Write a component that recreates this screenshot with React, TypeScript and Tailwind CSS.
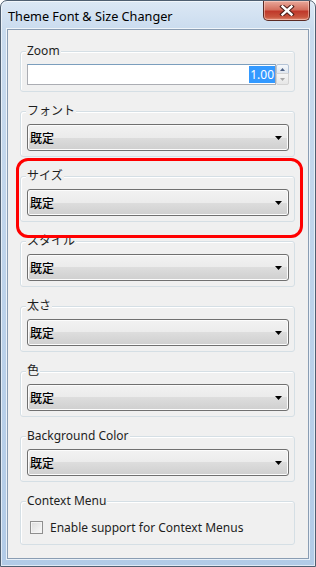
import React from "react";

const ui = { fontFamily: '"Noto Sans", "Noto Sans CJK JP", sans-serif' };
const jp = { fontFamily: '"Noto Sans CJK JP", sans-serif' };

const Arrow = () => (
  <svg width="7" height="4" viewBox="0 0 7 4" className="block">
    <path d="M0 0h7L3.5 4z" fill="#000" />
  </svg>
);

const Select: React.FC<{ value?: string }> = ({ value = "既定" }) => (
  <div className="flex h-[27px] items-center justify-between rounded-[3px] border border-[#707070] bg-[linear-gradient(#f2f2f2_0%,#ebebeb_50%,#dddddd_50%,#cfcfcf_100%)] pl-[2px] pr-[6px] shadow-[inset_0_0_0_1px_#fcfcfc]">
    <span className="text-[12px] font-medium leading-none text-black" style={jp}>
      {value}
    </span>
    <Arrow />
  </div>
);

const Group: React.FC<{ label: string; pb?: string; children: React.ReactNode }> = ({ label, pb = "pb-[5px]", children }) => (
  <div className={`rounded-[3px] border border-[#d5dfe5] pl-[6px] pr-[5px] shadow-[inset_1px_1px_0_#fff] ${pb}`}>
    <div className="-ml-[1px] -mt-[11px] h-[16px] leading-[16px]">
      <span className="inline-block bg-[#f0f0f0] px-[1px] text-[12px] leading-[16px] text-[#1e1e1e]">{label}</span>
    </div>
    <div className="mt-[7px]">{children}</div>
  </div>
);

const Spin = () => (
  <div className="flex w-[13px] flex-col">
    <div className="flex h-[10px] items-center justify-center rounded-t-[2px] border border-[#b4c3d6] bg-[linear-gradient(#f4f7fb,#dfe6ef)]">
      <svg width="5" height="3" viewBox="0 0 5 3"><path d="M2.5 0L5 3H0z" fill="#4d6185" /></svg>
    </div>
    <div className="-mt-px flex h-[12px] items-center justify-center rounded-b-[2px] border border-[#d3d3d3] bg-[linear-gradient(#f5f5f5,#e6e6e6)]">
      <svg width="5" height="3" viewBox="0 0 5 3"><path d="M0 0h5L2.5 3z" fill="#a8a8a8" /></svg>
    </div>
  </div>
);

const CloseButton = () => (
  <div className="flex h-[20px] w-[47px] items-center justify-center rounded-b-[5px] border border-t-0 border-[#5c2b25] bg-[linear-gradient(#e9a99b_0%,#d4705f_45%,#c0392b_55%,#c9563f_85%,#e0907a_100%)] shadow-[inset_0_0_0_1px_rgba(255,220,210,0.5)]">
    <svg width="16" height="11" viewBox="0 0 16 11">
      <path d="M3.5 1.5l9 8M12.5 1.5l-9 8" stroke="#4a1d18" strokeWidth="4.4" strokeLinecap="square" />
      <path d="M3.5 1.5l9 8M12.5 1.5l-9 8" stroke="#fff" strokeWidth="2.4" strokeLinecap="square" />
    </svg>
  </div>
);

export default function App() {
  return (
    <div className="h-[567px] w-[316px] overflow-hidden bg-white" style={ui}>
      <div className="flex h-full flex-col rounded-t-[7px] border border-[#4f5f71] bg-[linear-gradient(180deg,#dce8f5_0px,#c9dbee_30px,#bcd2ea_300px,#b2cbe7_567px)] shadow-[inset_0_0_0_1px_rgba(255,255,255,0.6)]">
        <div className="flex h-[28px] shrink-0 items-start justify-between pl-[7px] pr-[5px]">
          <span className="mt-[7px] text-[12.7px] leading-[16px] text-black">Theme Font &amp; Size Changer</span>
          <CloseButton />
        </div>
        <div className="relative mx-[6px] mb-[7px] flex-1 border border-[#8a9db3] bg-[#f0f0f0] pb-[13px] pl-[12px] pr-[13px] pt-[21px] shadow-[0_0_0_1px_rgba(255,255,255,0.7)]">
          <div className="flex flex-col gap-[19px]">
            <Group label="Zoom" pb="pb-[6px]">
              <div className="flex h-[21px]">
                <div className="flex flex-1 items-center justify-end border border-[#abadb3] border-t-[#7b9ebd] bg-white">
                  <span className="bg-[#3399ff] px-px text-[12px] leading-[17px] text-white">1.00</span>
                </div>
                <Spin />
              </div>
            </Group>
            <Group label="フォント">
              <Select />
            </Group>
            <Group label="サイズ">
              <Select />
            </Group>
            <Group label="スタイル">
              <Select />
            </Group>
            <Group label="太さ">
              <Select />
            </Group>
            <Group label="色">
              <Select />
            </Group>
            <Group label="Background Color">
              <Select />
            </Group>
            <Group label="Context Menu" pb="pb-[10px]">
              <div className="flex items-center gap-[7px] pl-[3px] pt-[7px]">
                <span className="h-[13px] w-[13px] border border-[#8f8f8f] bg-[linear-gradient(135deg,#dcdcdc,#fafafa)] shadow-[inset_0_0_0_1px_#f4f4f4]" />
                <span className="text-[12px] leading-[13px] text-[#1e1e1e]">Enable support for Context Menus</span>
              </div>
            </Group>
          </div>
          <div className="pointer-events-none absolute left-[8px] top-[128px] h-[80px] w-[287px] rounded-[12px] border-[3px] border-[#ff0000]" />
        </div>
      </div>
    </div>
  );
}
